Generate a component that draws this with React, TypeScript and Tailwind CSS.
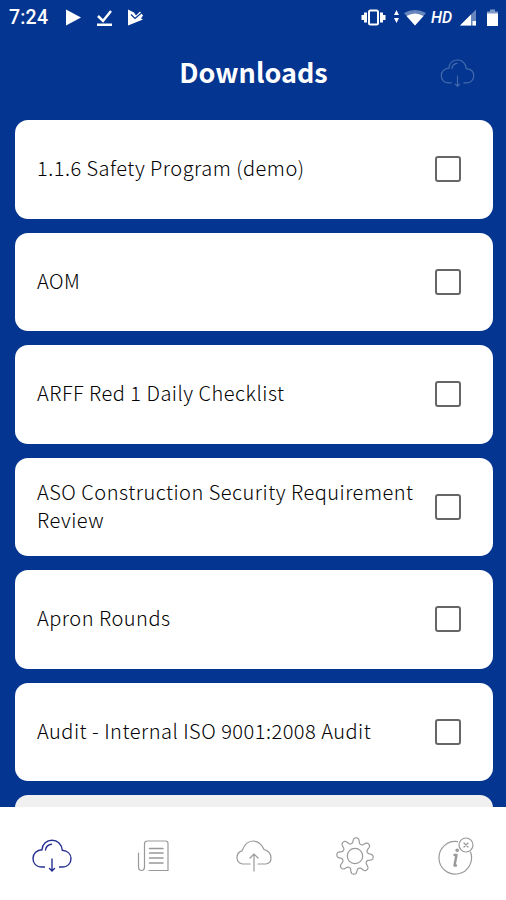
import type { ReactNode } from "react";

interface IconProps {
  className?: string;
}

interface RowProps {
  title: string;
}

const downloads = [
  "1.1.6 Safety Program (demo)",
  "AOM",
  "ARFF Red 1 Daily Checklist",
  "ASO Construction Security Requirement Review",
  "Apron Rounds",
  "Audit - Internal ISO 9001:2008 Audit",
];

const CloudDownloadIcon = ({ className }: IconProps) => (
  <svg viewBox="0 0 40 34" fill="none" stroke="currentColor" strokeWidth="1.400" strokeLinecap="round" className={className}>
    <path d="M12.500 28H9.500C4.500 28 1 24.500 1 19.500C1 14.500 5 11 10 10.800C10.500 5 14.500 1.200 20 1.200C25.500 1.200 29.800 5 30.300 11.300C35.500 11.800 39 15 39 19.500C39 24.500 35.500 28 30.500 28H27.500" />
    <path d="M13.500 11C13.800 8 16 5.700 19.500 5.200" />
    <path d="M20 20V31.500M17.500 29.500L20 32L22.500 29.500" />
  </svg>
);

const CloudUploadIcon = ({ className }: IconProps) => (
  <svg viewBox="0 0 36 32" fill="none" stroke="currentColor" strokeWidth="1.200" strokeLinecap="round" className={className}>
    <path d="M14 24H6.500C3 23.500 1 21 1 17.500C1 13.500 3.500 11.500 6 10.800C7.500 7 10 1 17 1C23 1 26 5 28 9.500C31.500 10.500 35 13.500 35 18C35 21 33 23.500 30 24H22" />
    <path d="M18 31V14.500M14 18L18 14L22 18" />
  </svg>
);

const DocumentIcon = ({ className }: IconProps) => (
  <svg viewBox="0 0 32 32" fill="none" stroke="currentColor" strokeWidth="1.200" strokeLinecap="round" className={className}>
    <path d="M7.500 27V4C7.500 2 8.500 1 10.500 1H28.500C30 1 31 2 31 3.500V30.500H12" />
    <path d="M1.500 13V26.500C1.500 29 2.500 30.500 4.500 30.500C6.500 30.500 7.500 29 7.500 26.500" />
    <path d="M12.500 8.500H26M12.500 13H26M12.500 18H26M12.500 23H26" strokeWidth="1.500" />
  </svg>
);

// outline of an eight-toothed wheel around (19, 19)
const gearPath = Array.from({ length: 160 }, (_, i) => {
  const angle = (i / 160) * Math.PI * 2 - Math.PI / 2;
  const radius = 15.5 + 2.9 * Math.tanh(1.6 * Math.cos(8 * (angle + Math.PI / 2) - 0.6));
  return `${i ? "L" : "M"}${(19 + radius * Math.cos(angle)).toFixed(2)} ${(19 + radius * Math.sin(angle)).toFixed(2)}`;
}).join("");

const GearIcon = ({ className }: IconProps) => (
  <svg viewBox="0 0 38 38" fill="none" stroke="currentColor" strokeWidth="1.200" strokeLinejoin="round" className={className}>
    <path d={`${gearPath}Z`} />
    <circle cx="19" cy="19" r="7.700" />
  </svg>
);

const InfoIcon = ({ className }: IconProps) => (
  <svg viewBox="0 0 36 38" fill="none" stroke="currentColor" strokeWidth="1.200" strokeLinecap="round" className={className}>
    <path d="M19.500 4.600A16.300 16.300 0 1 0 32.500 15" />
    <circle cx="28" cy="8" r="7" />
    <path d="M26 6L30 10M30 6L26 10" />
    <path d="M16.500 18H18.500L16.500 28.500H18" strokeWidth="2.400" strokeLinejoin="round" />
    <circle cx="19.200" cy="13.300" r="1.800" fill="currentColor" stroke="none" />
  </svg>
);

const StatusBar = () => (
  <div className="flex h-[35px] shrink-0 items-center justify-between pr-[5px] pl-[9px]">
    <div className="flex items-center">
      <span className="w-[57px] font-[Roboto,sans-serif] text-[19.500px] font-medium tracking-[0.2px]">7:24</span>
      <svg viewBox="0 0 80 20" fill="currentColor" className="h-5 w-20">
        <path d="M0 1.500L15 9.500L0 17.500Z" />
        <path d="M32 8L37 13L45 3" fill="none" stroke="currentColor" strokeWidth="2.500" />
        <path d="M31 15.500H46V18H31Z" />
        <path d="M62 1.500L68 4.500L70 7.500L74 3.500L77 7.500L75 10.500L77 11.500L62 17.500Z" />
        <path d="M65 6.500L69 10.500L76 4.500" fill="none" stroke="#043590" strokeWidth="1.200" />
      </svg>
    </div>
    <div className="flex items-center">
      <svg viewBox="0 0 66 20" fill="currentColor" className="h-5 w-[66px]">
        <rect x="8" y="2.500" width="9" height="14" rx="1.500" fill="none" stroke="currentColor" strokeWidth="2" />
        <path d="M3 4.500H6V14.500H3ZM0.500 7H3V12H0.500ZM19 4.500H22V14.500H19ZM22 7H24.500V12H22Z" />
        <path d="M33 7L35.500 2L38 7ZM33 10L35.500 15L38 10Z" />
        <path d="M43 5Q54 -1 65 5L54 17.500Z" opacity="0.4" />
        <path d="M45.500 8Q54 3 62.500 8L54 17.500Z" />
      </svg>
      <span className="ml-[4px] w-[28px] font-[Roboto,sans-serif] text-[16px] font-medium italic">HD</span>
      <svg viewBox="0 0 42 20" fill="currentColor" className="h-5 w-[42px]">
        <path d="M1 17.500L17 1.500V17.500Z" opacity="0.4" />
        <path d="M1 17.500L12 6.500V17.500ZM13.500 13H17V17.500H13.500Z" />
        <path d="M31 1.500H36V3.500H39V17.500H28V3.500H31Z" opacity="0.5" />
        <path d="M28 5.500H39V18H28Z" />
      </svg>
    </div>
  </div>
);

const DownloadRow = ({ title }: RowProps) => (
  <div className="flex h-[98.5px] shrink-0 items-center justify-between rounded-[13px] bg-white pr-[32px] pl-[22.5px]">
    <span className="w-[385px] pb-[2px] text-[20px] leading-7 font-light tracking-[0.5px] text-black">{title}</span>
    <span className="size-[26px] shrink-0 rounded-[3px] border-2 border-[#666]" />
  </div>
);

const NavItem = ({ children }: { children: ReactNode }) => (
  <button className="flex h-full flex-1 items-center justify-center">{children}</button>
);

const App = () => {
  return (
    <div className="flex h-[900px] w-[506px] flex-col overflow-hidden bg-[#043590] font-['Noto_Sans_CJK_SC',sans-serif] text-white">
      <StatusBar />
      <header className="grid h-[85px] shrink-0 grid-cols-[1fr_auto_1fr] items-center pb-[9px] pl-px">
        <h1 className="col-start-2 pb-[2px] text-[27px] font-bold">Downloads</h1>
        <CloudDownloadIcon className="mr-[31px] h-[29px] w-[35px] justify-self-end text-[#446aac]" />
      </header>
      <main className="flex min-h-0 flex-1 flex-col gap-[14px] overflow-hidden pr-[13.5px] pl-[14.5px]">
        {downloads.map(title => (
          <DownloadRow key={title} title={title} />
        ))}
        <div className="h-[98.5px] shrink-0 rounded-[13px] bg-[#f0f0f0]" />
      </main>
      <nav className="flex h-[93px] shrink-0 bg-white pt-[4px] pl-px text-[#999]">
        <NavItem>
          <CloudDownloadIcon className="h-[34px] w-[40px] text-[#252f91]" />
        </NavItem>
        <NavItem>
          <DocumentIcon className="size-8" />
        </NavItem>
        <NavItem>
          <CloudUploadIcon className="h-[32px] w-[36px]" />
        </NavItem>
        <NavItem>
          <GearIcon className="size-[38px]" />
        </NavItem>
        <NavItem>
          <InfoIcon className="h-[38px] w-[36px]" />
        </NavItem>
      </nav>
    </div>
  );
};

export default App;
